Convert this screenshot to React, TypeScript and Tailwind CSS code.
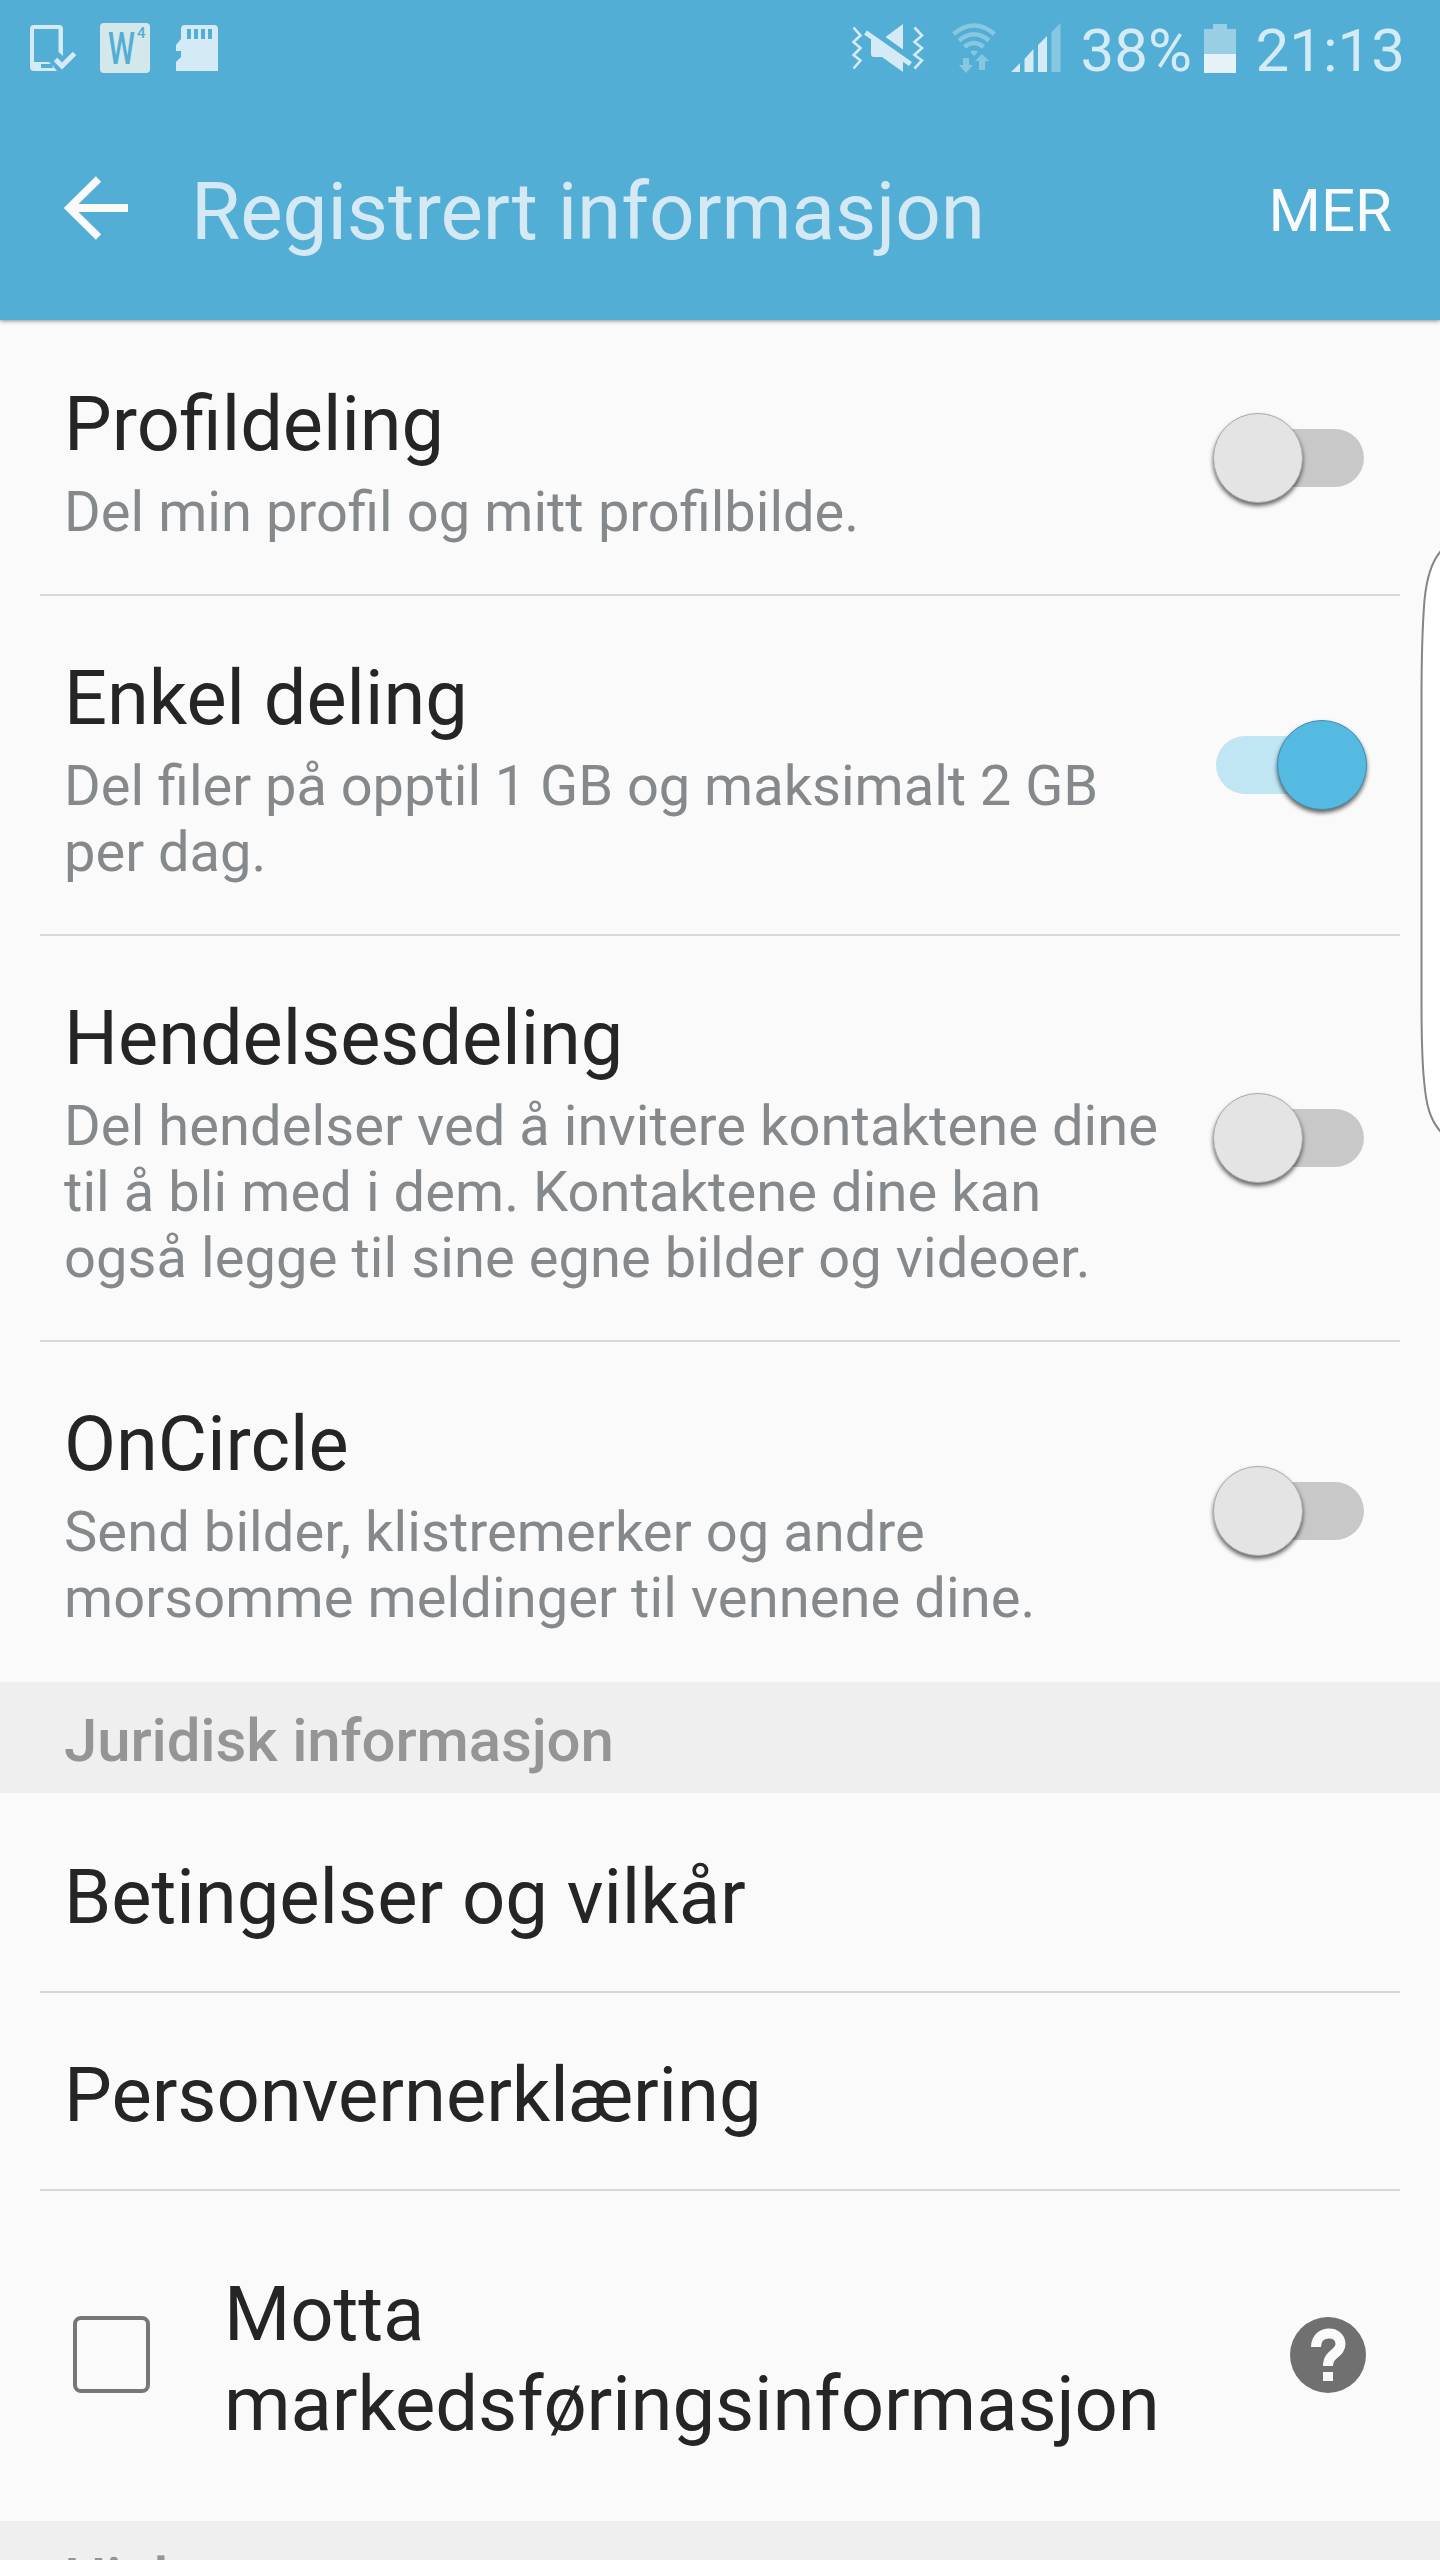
import type { ReactNode } from "react";

interface SettingRowProps {
  title: string;
  lines: string[];
  spacing?: string;
  on?: boolean;
  first?: boolean;
  last?: boolean;
}

const settings: SettingRowProps[] = [
  {
    title: "Profildeling",
    lines: ["Del min profil og mitt profilbilde."],
    spacing: "[word-spacing:0.3px]",
    first: true,
  },
  {
    title: "Enkel deling",
    lines: ["Del filer på opptil 1 GB og maksimalt 2 GB", "per dag."],
    spacing: "[word-spacing:-0.1px]",
    on: true,
  },
  {
    title: "Hendelsesdeling",
    lines: [
      "Del hendelser ved å invitere kontaktene dine",
      "til å bli med i dem. Kontaktene dine kan",
      "også legge til sine egne bilder og videoer.",
    ],
    spacing: "tracking-[0.09px]",
  },
  {
    title: "OnCircle",
    lines: ["Send bilder, klistremerker og andre", "morsomme meldinger til vennene dine."],
    spacing: "tracking-[0.1px]",
    last: true,
  },
];

function StatusBar() {
  return (
    <div className="flex h-[100px] items-center pl-[29px] pr-[35px] text-[60px] leading-[71px] text-[#d4ebf6]">
      <svg className="mt-[-4px] h-[48px] w-[48px] shrink-0" viewBox="0 0 48 48" fill="none">
        <path
          d="M34 32 L29.500 28 V5 H5 V38 H20 L24 42 L28 47 H5 Q1 47 1 43 V5 Q1 1 5 1 H30 Q34 1 34 5 Z"
          fill="currentColor"
        />
        <path d="M12 40 h11 l1 4 h-12z" fill="#53aed5" />
        <path d="M26.500 35.500 L33 42 L45.500 29.500" stroke="currentColor" strokeWidth="5" />
      </svg>
      <div className="relative ml-[23px] mt-[-4px] h-[50px] w-[50px] shrink-0 rounded-[4px] bg-[#d4e8ec] text-[#53aed5]">
        <span className="absolute left-[8px] top-[3px] origin-left scale-x-[0.68] text-[45px] font-medium leading-[46px]">W</span>
        <span className="absolute left-[37px] top-[2px] text-[15px] font-medium leading-[16px]">4</span>
      </div>
      <svg className="ml-[26px] mt-[-4px] h-[48px] w-[42px] shrink-0" viewBox="0 0 42 48">
        <path
          d="M9 1 H38 Q42 1 42 5 V47 H0 V38 L5 33 V27 H0 V21 L5 15 V5 Q5 1 9 1Z M11 5 v10 h4 v-10z M18 5 v10 h4 v-10z M25 5 v10 h4 v-10z M32 5 v10 h4 v-10z"
          fill="currentColor"
          fillRule="evenodd"
        />
      </svg>

      <div className="ml-auto flex items-center">
        {/* sound off, vibrate on */}
        <svg className="mt-[-4px] h-[50px] w-[73px]" viewBox="0 0 73 50" fill="none">
          <path d="M1.500 4.500 L8.500 12.500 L1.500 19 L8.500 25 L1.500 32 L8.500 37.500 L1.500 45.500" stroke="currentColor" strokeWidth="2.600" />
          <path d="M62.500 4.500 L70 12.500 L62.500 19 L70 25 L62.500 32 L70 37.500 L62.500 45.500" stroke="currentColor" strokeWidth="2.600" />
          <path d="M33.500 14 L51 1 V26.500 Z M19 17 L22 14 L51 36 V49 L30 34 H22 Q19 34 19 31Z" fill="currentColor" />
          <path d="M13.500 9.500 L58.500 41" stroke="currentColor" strokeWidth="5" />
        </svg>
        <svg className="ml-[27px] mt-[-4px] h-[50px] w-[44px]" viewBox="0 0 44 50" fill="none">
          <g stroke="#88c7e2" strokeWidth="4.500">
            <path d="M1.500 11 Q22 -6 42.500 11" />
            <path d="M7 17.500 Q22 5 37 17.500" />
            <path d="M12.500 24 Q22 16 31.500 24" />
          </g>
          <path d="M18 29 Q22 26 26 29 L22 33Z" fill="#88c7e2" />
          <path d="M11 35 h6 v7 h4 L14 50 L7 42 h4z M27 47 h6 v-9 h4 L30 31 L23 38 h4z" fill="#88c7e2" />
        </svg>
        <svg className="ml-[15px] mt-[-4px] h-[50px] w-[50px]" viewBox="0 0 50 50">
          <path d="M0 49 L9 40 V49Z M13.500 36 L22.500 26 V49 H13.500Z M27 22 L36 13 V49 H27Z" fill="currentColor" />
          <path d="M40.500 9 L49.500 0 V49 H40.500Z" fill="#88c7e2" />
        </svg>
        <span className="ml-[20px] mt-px w-[123px]">38%</span>
        <svg className="mt-[-4px] h-[50px] w-[32px]" viewBox="0 0 32 50">
          <path d="M0 6 H9 V1 H23 V6 H32 V32 H0Z" fill="#98cfe4" />
          <path d="M0 31 H32 V50 H0Z" fill="#e5f3f9" />
        </svg>
        <span className="ml-[20px] mt-px">21:13</span>
      </div>
    </div>
  );
}

function Header() {
  return (
    <header className="h-[320px] bg-[#53aed5] shadow-[0_1px_4px_rgba(0,0,0,0.45)]">
      <StatusBar />
      <div className="flex h-[220px] items-start pl-[64px] pr-[48px]">
        <svg className="mt-[76px] h-[64px] w-[64px] shrink-0" viewBox="0 0 64 64" fill="none" stroke="#fafafa">
          <path d="M34.500 3 L5 32 L34.500 61" strokeWidth="7.500" />
          <path d="M5 32 H64" strokeWidth="8" />
        </svg>
        <h1 className="ml-[63px] mt-[65px] text-[80px] leading-[94px] tracking-[-0.07px] text-[#d4e9f3]">
          Registrert informasjon
        </h1>
        <button className="ml-auto mt-[75px] text-[60px] leading-[71px] text-[#fafafa]">MER</button>
      </div>
    </header>
  );
}

function Toggle({ on }: { on?: boolean }) {
  return on ? (
    <div className="relative mb-[8px] h-[58px] w-[148px] rounded-full bg-[#c0e6f3]">
      <span className="absolute left-[61px] top-[-16px] h-[90px] w-[90px] rounded-full border border-[#3f8fae] bg-[#54bae1] shadow-[0_3px_4px_rgba(0,0,0,0.6)]" />
    </div>
  ) : (
    <div className="relative mb-[8px] h-[58px] w-[148px] rounded-full bg-[#c8c8c8]">
      <span className="absolute left-[-3px] top-[-16px] h-[90px] w-[90px] rounded-full border border-[#acacac] bg-[#e4e4e4] shadow-[0_3px_4px_rgba(0,0,0,0.6)]" />
    </div>
  );
}

function Divider({ hidden }: { hidden?: boolean }) {
  return <div className={hidden ? "h-[2px]" : "mx-[40px] h-[2px] bg-[#d8d8d8]"} />;
}

function SettingRow({ title, lines, spacing, on, first, last }: SettingRowProps) {
  return (
    <>
      <div className={`flex items-center pb-[49px] pl-[64px] pr-[76px] ${first ? "pt-[59px]" : "pt-[57px]"}`}>
        <div className="flex-1 whitespace-nowrap">
          <h2 className="text-[75.7px] leading-[90px] text-[#252525]">{title}</h2>
          <div className={`mt-[10px] text-[56px] leading-[66px] text-[#85898c] ${spacing}`}>
            {lines.map((line) => (
              <p key={line}>{line}</p>
            ))}
          </div>
        </div>
        <Toggle on={on} />
      </div>
      <Divider hidden={last} />
    </>
  );
}

function SectionHeader({ children }: { children: ReactNode }) {
  return (
    <div className="h-[111px] bg-[#efefef] pl-[64px] pt-[23px] text-[60px] font-medium leading-[71px] tracking-[-0.14px] text-[#959595]">
      {children}
    </div>
  );
}

function LinkRow({ children, first }: { children: ReactNode; first?: boolean }) {
  return (
    <>
      <div
        className={`pb-[49px] pl-[64px] text-[76px] leading-[90px] tracking-[-0.05px] text-[#252525] ${
          first ? "pt-[59px]" : "pt-[57px]"
        }`}
      >
        {children}
      </div>
      <Divider />
    </>
  );
}

export default function App() {
  return (
    <div className="relative h-[2560px] w-[1440px] overflow-hidden bg-[#fafafa] font-['Roboto',sans-serif]">
      <Header />
      <main>
        {settings.map((item) => (
          <SettingRow key={item.title} {...item} />
        ))}
        <SectionHeader>Juridisk informasjon</SectionHeader>
        <LinkRow first>Betingelser og vilkår</LinkRow>
        <LinkRow>Personvernerklæring</LinkRow>
        <div className="flex h-[330px] items-center pl-[73px] pr-[74px]">
          <span className="mb-[3px] h-[77px] w-[77px] rounded-[8px] border-4 border-[#777777]" />
          <p className="ml-[74px] mt-[6px] flex-1 text-[76px] leading-[90px] tracking-[-0.1px] text-[#252525]">
            Motta
            <br />
            markedsføringsinformasjon
          </p>
          <svg className="mb-[2px] h-[76px] w-[76px]" viewBox="0 0 76 76">
            <circle cx="38" cy="38" r="38" fill="#707070" />
            <path d="M26 30 C26 12.500 50.500 12.500 50.500 27 C50.500 37 38 36 38 49" fill="none" stroke="#fafafa" strokeWidth="10" />
            <path d="M33 55 h10 v9 h-10z" fill="#fafafa" />
          </svg>
        </div>
        <SectionHeader>Hjelp</SectionHeader>
      </main>

      {/* edge panel handle */}
      <svg className="absolute right-0 top-[540px] h-[600px] w-[20px]" viewBox="0 0 20 600">
        <path
          d="M21 11 C11 22 6.500 40 4.500 60 C2.500 85 1.500 120 1.500 160 V460 C1.500 490 2 520 4 540 C6 565 10 580 21 592"
          fill="#ffffff"
          stroke="#858585"
          strokeWidth="2"
        />
      </svg>
    </div>
  );
}
